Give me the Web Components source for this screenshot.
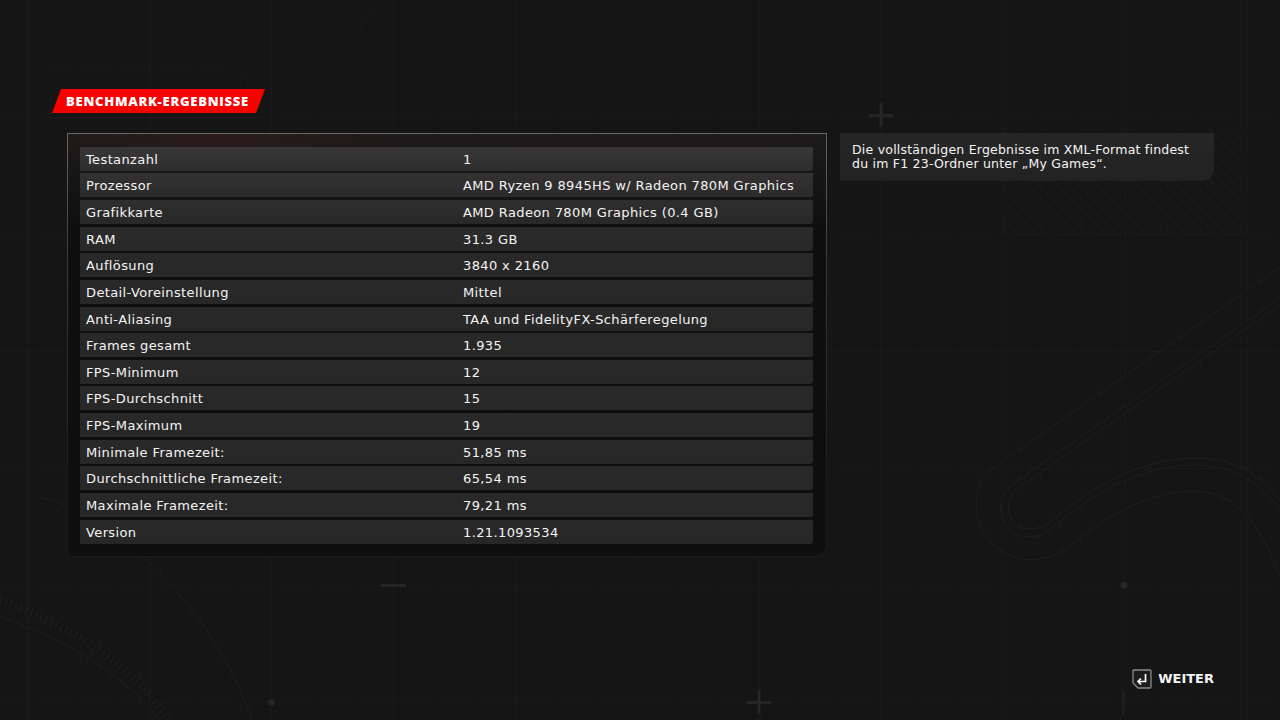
<!DOCTYPE html>
<html lang="de"><head><meta charset="utf-8"><title>Benchmark-Ergebnisse</title>
<style>
html,body{margin:0;height:100%;background:#161516}
</style></head><body>
<template id="t-bg">
<style>:host{display:block;position:absolute;inset:0;z-index:0;overflow:hidden}svg{display:block}</style>
<svg width="1280" height="720" viewBox="0 0 1280 720" fill="none">
<defs>
<pattern id="v" width="10" height="720" patternUnits="userSpaceOnUse"><rect x="0" width="1" height="720" fill="#fff" opacity=".006"/></pattern>
<pattern id="h" width="7" height="7" patternUnits="userSpaceOnUse" patternTransform="rotate(-45)"><rect width="2" height="7" fill="#fff" opacity=".012"/></pattern>
</defs>
<rect width="1280" height="720" fill="url(#v)"/>
<rect x="1003" y="130" width="243" height="105" fill="url(#h)"/>
<g stroke="#fff" stroke-opacity=".018">
<path d="M27.5 0V720M149.5 0V720M271.5 0V720M393.5 0V720M515.5 0V720M637.5 0V720M759.5 0V720M881.5 0V720M1003.5 0V720M1124.5 0V720M1246.5 0V720"/>
<path d="M0 117.5H1280M0 234.5H1280M0 351.5H1280M0 468.5H1280M0 585.5H1280M0 702.5H1280"/>
</g>
<g stroke="#fff" stroke-opacity=".045">
<path d="M395 140.500H640M394 140L412 165M461 140L478 165M515 140L533 165M584 140L600 165"/>
<path d="M40 497C110 515 210 600 252 720"/>
<path d="M-5 615C70 640 130 680 160 720"/>
<path d="M1280 267L990 470C970 490 970 530 1000 550C1030 570 1060 555 1075 542C1120 505 1160 491 1195 491C1240 491 1265 535 1280 577"/>
<path d="M1280 305L1020 487C1000 500 1008 529 1028 529C1040 529 1048 524 1056 517C1110 473 1155 458 1197 458C1235 458 1262 475 1280 500"/>
<path d="M1280 298L1013 484C990 500 1002 537 1028 537C1042 537 1050 530 1060 521C1110 481 1155 465 1197 465C1235 465 1262 485 1280 510"/>
</g>
<path d="M-5 598C70 625 140 670 168 720" stroke="#fff" stroke-opacity=".035" stroke-width="8" stroke-dasharray="1.500 4"/>
<path d="M35 0V48Q35 65 52 65H225Q248 65 248 90V110M385 0Q355 20 355 60V140" stroke="#fff" stroke-opacity=".04" stroke-dasharray="1.500 2.500"/>
<g fill="#fff" fill-opacity=".065">
<path d="M869 114h24v3h-24zM879.500 103h3v24h-3zM747 701h24v3h-24zM757.500 690h3v24h-3zM381 584h25v3h-25z"/>
<path d="M1122 690h2v25h-2z" fill-opacity=".05"/>
<circle cx="271.500" cy="702.500" r="3.500"/><circle cx="1124" cy="585" r="3.500"/>
</g>
</svg>
</template>
<template id="t-title">
<style>
:host{display:block;width:213px;height:24px;background:#f60000;clip-path:polygon(9px 0,100% 0,calc(100% - 9px) 100%,0 100%);
font:800 13px/24px "Open Sans",sans-serif;color:#fff;box-sizing:border-box;padding-left:14px;white-space:nowrap;letter-spacing:.75px}
</style><slot></slot>
</template>
<template id="t-panel">
<style>
:host{display:block;box-sizing:border-box;width:760px;height:424px;padding:12.700px 13px 12px 12px;
border:1px solid transparent;border-radius:0 0 12px 0;
background:radial-gradient(ellipse 190px 40px at 150px 0,#2b1a1a,transparent) padding-box,linear-gradient(#1d1b1b,#100f0f 22%) padding-box,linear-gradient(180deg,#6c6663,#3d3a38 30%,#1c1b1b 85%) border-box}
.rows{display:flex;flex-direction:column;justify-content:space-between;height:397px}
</style><div class="rows"><slot></slot></div>
</template>
<template id="t-row">
<style>
:host{display:grid;grid-template-columns:377px 1fr;height:24px;align-items:center;padding:1px 0 0 6px;box-sizing:border-box;
background:linear-gradient(var(--a,#2a2929),var(--b,#272727));border-radius:0 0 3px 0;
font:400 13px/23px "DejaVu Sans",sans-serif;letter-spacing:.38px;color:#f5f4f4;white-space:nowrap}
</style><span><slot name="k"></slot></span><span><slot name="v"></slot></span>
</template>
<template id="t-note">
<style>
:host{display:block;box-sizing:border-box;width:374px;height:48px;padding:10px 12px;background:linear-gradient(#272626,#232222);border-radius:0 0 12px 0;
font:400 12.500px/13.500px "DejaVu Sans",sans-serif;letter-spacing:.22px;color:#f5f4f4;white-space:nowrap}
</style><slot></slot>
</template>
<template id="t-key">
<style>
:host{display:flex;align-items:center;gap:6px;font:700 13px/20px "DejaVu Sans",sans-serif;color:#f4f4f4}
svg{display:block}
</style>
<svg width="20" height="20" viewBox="0 0 20 20" fill="none"><path d="M1.500 1H18a1 1 0 0 1 1 1V18a1 1 0 0 1-1 1H6L1 14V1.500z" stroke="#8a8a8a" stroke-width="1.300" fill="#1d1c1d"/><path d="M13.500 5V12.500H6M9 9.500L6 12.500L9 15.500" stroke="#fff" stroke-width="1.700"/></svg>
<span><slot></slot></span>
</template>
<template id="t-screen">
<style>
:host{display:flex;flex-direction:column;position:relative;width:1280px;height:720px;box-sizing:border-box;padding:89px 66px 31px 52px;overflow:hidden}
.c{position:relative;z-index:1;display:flex;flex-direction:column;flex:1}
.main{display:flex;gap:13px;margin:20px 0 0 15px;align-items:flex-start}
.foot{display:flex;justify-content:flex-end;margin-top:auto}
</style>
<bench-bg></bench-bg>
<div class="c">
<slot name="title"></slot>
<div class="main"><slot name="panel"></slot><slot name="note"></slot></div>
<div class="foot"><slot name="foot"></slot></div>
</div>
</template>
<bench-screen>
<bench-title slot="title">BENCHMARK-ERGEBNISSE</bench-title>
<bench-panel slot="panel" id="p"></bench-panel>
<bench-note slot="note">Die vollständigen Ergebnisse im XML-Format findest<br>du im F1 23-Ordner unter „My Games“.</bench-note>
<bench-key slot="foot">WEITER</bench-key>
</bench-screen>
<script>
function def(n,t){customElements.define(n,class extends HTMLElement{constructor(){super();this.attachShadow({mode:'open'}).appendChild(document.getElementById(t).content.cloneNode(true))}})}
[['bench-bg','t-bg'],['bench-title','t-title'],['bench-panel','t-panel'],['bench-row','t-row'],['bench-note','t-note'],['bench-key','t-key'],['bench-screen','t-screen']].forEach(a=>def(a[0],a[1]));
const data=[['Testanzahl','1'],['Prozessor','AMD Ryzen 9 8945HS w/ Radeon 780M Graphics'],['Grafikkarte','AMD Radeon 780M Graphics (0.4 GB)'],['RAM','31.3 GB'],['Auflösung','3840 x 2160'],['Detail-Voreinstellung','Mittel'],['Anti-Aliasing','TAA und FidelityFX-Schärferegelung'],['Frames gesamt','1.935'],['FPS-Minimum','12'],['FPS-Durchschnitt','15'],['FPS-Maximum','19'],['Minimale Framezeit:','51,85 ms'],['Durchschnittliche Framezeit:','65,54 ms'],['Maximale Framezeit:','79,21 ms'],['Version','1.21.1093534']];
const p=document.getElementById('p');
data.forEach((d,i)=>{const r=document.createElement('bench-row');
const top=['#383637','#333132','#2f2e2e','#2c2b2b'][i]||'#2a2929',bot=['#2f2e2e','#2c2b2b','#292828','#282828'][i]||'#272727';
r.style.setProperty('--a',top);r.style.setProperty('--b',bot);
const k=document.createElement('span');k.slot='k';k.textContent=d[0];const v=document.createElement('span');v.slot='v';v.textContent=d[1];r.append(k,v);p.appendChild(r)});
</script>
</body></html>
